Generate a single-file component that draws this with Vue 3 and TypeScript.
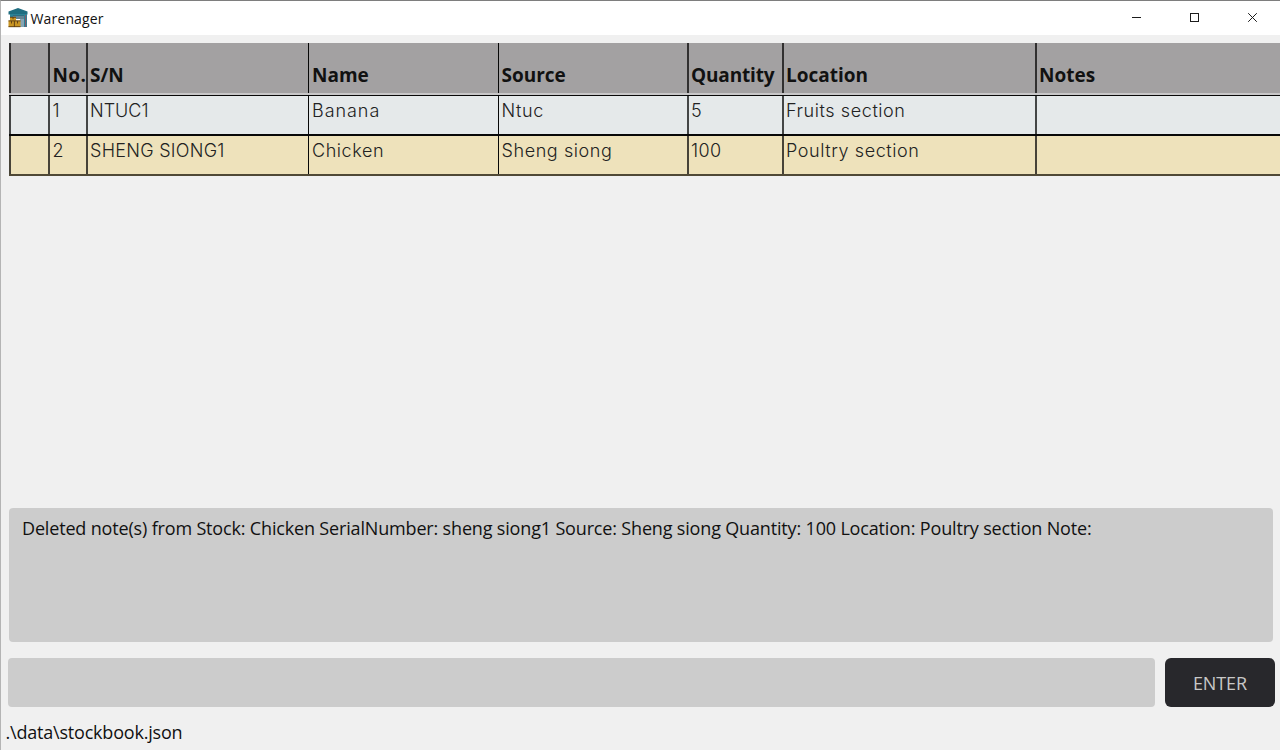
<script setup lang="ts">
import { ref } from 'vue'

interface Stock {
  serial: string
  name: string
  source: string
  quantity: number
  location: string
  notes: string
}

const headings: string[] = ['', 'No.', 'S/N', 'Name', 'Source', 'Quantity', 'Location', 'Notes']
const stocks: Stock[] = [
  { serial: 'NTUC1', name: 'Banana', source: 'Ntuc', quantity: 5, location: 'Fruits section', notes: '' },
  { serial: 'SHENG SIONG1', name: 'Chicken', source: 'Sheng siong', quantity: 100, location: 'Poultry section', notes: '' },
]
const columns: string[] = ['mark', 'no', 'serial', 'name', 'source', 'quantity', 'location', 'notes']
const command = ref('')
const result =
  'Deleted note(s) from Stock: Chicken SerialNumber: sheng siong1 Source: Sheng siong Quantity: 100 Location: Poultry section Note:'
const cells = (s: Stock, i: number) => ['', i + 1, s.serial, s.name, s.source, s.quantity, s.location, s.notes]
</script>

<template>
  <div class="window">
    <header class="titlebar">
      <svg class="logo" width="20" height="20" viewBox="0 0 20 20">
        <path d="M0.5 3.6L10 0L19.5 3.6V6.5H0.5Z" fill="#1f6d80" />
        <path d="M2 6H19V19H16V8H5V11H2Z" fill="#2b8296" />
        <path d="M5 8H16V19H12V11H5Z" fill="#86a5b5" />
        <path d="M5 8H16M5 10H16" stroke="#34525f" stroke-width="0.8" />
        <path d="M17.6 7V19" stroke="#99505d" stroke-width="0.9" />
        <path d="M2 9H8V12.5H12.5V19H0.5V12.5H2Z" fill="#c99523" />
        <path d="M0.5 12.9H12.5M6.4 13V19M0.5 18.7H12.5M2 9.3H8M3.5 13V15.5M9.5 13V15.5M5 9V11.2" stroke="#5b3c13" stroke-width="0.9" />
      </svg>
      <span class="title">Warenager</span>
      <svg class="controls" width="160" height="34" viewBox="0 0 160 34" fill="none" stroke="#1c1c1c">
        <path d="M12 16.5H21" />
        <rect x="70.5" y="12.5" width="8" height="8" />
        <path d="M128.2 12.2L136.8 20.8M136.8 12.2L128.2 20.8" />
      </svg>
    </header>

    <main class="content">
      <section class="table">
        <div class="row head">
          <div v-for="(h, i) in headings" :key="i" class="cell" :class="columns[i]"><span>{{ h }}</span></div>
        </div>
        <div v-for="(s, r) in stocks" :key="s.serial" class="row body" :class="{ low: r === 1 }">
          <div v-for="(c, i) in cells(s, r)" :key="i" class="cell" :class="columns[i]"><span>{{ c }}</span></div>
        </div>
      </section>

      <section class="result"><span>{{ result }}</span></section>

      <form class="command" @submit.prevent>
        <input v-model="command" type="text" aria-label="Command" />
        <button type="submit"><span>ENTER</span></button>
      </form>
    </main>

    <footer class="status"><span>.\data\stockbook.json</span></footer>
  </div>
</template>

<style>
body {
  overflow: hidden;
}
</style>

<style scoped>
.window {
  box-sizing: border-box;
  width: 1280px;
  height: 750px;
  display: flex;
  flex-direction: column;
  overflow: hidden;
  background: #f0f0f0;
  border-top: 1px solid #7e7e7e;
  border-left: 1px solid #b4b4b4;
  font-family: 'Open Sans', 'Noto Sans', sans-serif;
  color: #111;
  white-space: nowrap;
}
.titlebar {
  flex: none;
  height: 34px;
  display: flex;
  align-items: center;
  background: #fff;
  padding-left: 7px;
}
.title {
  margin-left: 2.5px;
  font-size: 14px;
  letter-spacing: 0.15px;
}
.controls {
  margin-left: auto;
}
.content {
  display: flex;
  flex-direction: column;
}
.table {
  height: 465px;
  margin: 8px 0 0 8px;
}
.row {
  box-sizing: border-box;
  display: grid;
  grid-template-columns: 39px 38px 222px 190px 189px 95px 253px 245px;
}
.cell {
  box-sizing: border-box;
  overflow: hidden;
  border-left: 2px solid rgba(0, 0, 0, 0.7);
  padding-left: 2px;
}
.name,
.source {
  border-left: 1px solid #080808;
}
.no {
  padding-left: 2.5px;
}
.name {
  padding-left: 3px;
}
.source {
  padding-left: 2.5px;
}
.head {
  height: 52px;
  background: #a3a1a2;
  border-bottom: 2px solid #c8c7c8;
  font-size: 19px;
  font-weight: 700;
  line-height: 26px;
}
.head .cell {
  padding-top: 19px;
}
.head .no {
  letter-spacing: 0.4px;
}
.head .quantity {
  letter-spacing: -0.15px;
}
.body {
  height: 40px;
  background: #e5e9ea;
  border-top: 1px solid #080808;
  border-bottom: 1px solid #080808;
  font-family: Inter, 'Open Sans', sans-serif;
  font-size: 18px;
  font-weight: 300;
  line-height: 29px;
  color: #222;
}
.body .name {
  letter-spacing: 0.95px;
}
.body .source,
.body .location {
  letter-spacing: 0.58px;
}
.body .quantity {
  letter-spacing: 0.4px;
}
.low {
  height: 41px;
  background: #eee2bb;
  border-bottom: 2px solid #504936;
  line-height: 30px;
}
.low .name {
  letter-spacing: 0.57px;
}
.low .serial {
  letter-spacing: 0.27px;
}
.result {
  box-sizing: border-box;
  width: 1264px;
  height: 134px;
  margin-left: 8px;
  padding: 7px 13px;
  border-radius: 4px;
  background: #ccc;
  font-size: 18px;
  line-height: 26px;
  letter-spacing: -0.165px;
}
.command {
  display: flex;
  gap: 10px;
  margin: 16px 5px 0 7px;
  height: 49px;
}
input {
  flex: 1;
  border: 0;
  outline: 0;
  padding: 0 12px;
  border-radius: 4px;
  background: #ccc;
  font: inherit;
}
button {
  width: 110px;
  padding: 0;
  border: 0;
  border-radius: 6px;
  background: #28282c;
  color: #c8c8c8;
  font-family: inherit;
  font-size: 18px;
  letter-spacing: -0.1px;
}
.status {
  margin: 12px 0 0 4.5px;
  font-size: 18px;
  line-height: 26px;
  letter-spacing: -0.2px;
}
</style>
